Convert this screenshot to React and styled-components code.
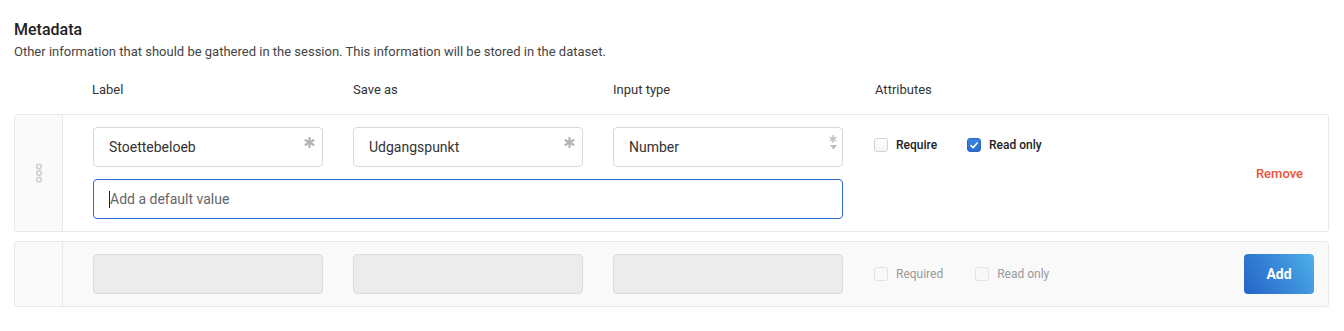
import React from "react";
import styled, { createGlobalStyle } from "styled-components";

const Global = createGlobalStyle`
  html, body { margin: 0; padding: 0; background: #fff; }
  body { font-family: Roboto, "Noto Sans", "Liberation Sans", sans-serif; color: #333; }
  * { box-sizing: border-box; }
`;

const Page = styled.div`
  padding: 20px 15px 0 14px;
  width: 1344px;
`;

const Title = styled.h2`
  margin: 0;
  font-size: 16px;
  font-weight: 500;
  color: #222;
  line-height: 20px;
`;

const Subtitle = styled.p`
  margin: 4px 0 0;
  font-size: 13px;
  color: #444;
  line-height: 16px;
`;

const HeaderRow = styled.div`
  display: grid;
  grid-template-columns: 261px 260px 262px 1fr;
  padding-left: 78px;
  margin: 18px 0 14px;
  height: 22px;
  align-items: center;
`;

const HeaderCell = styled.div`
  font-size: 13px;
  color: #333;
`;

const Card = styled.div`
  display: flex;
  margin-top: ${(p) => p.$mt}px;
  border: 1px solid #e6e8ef;
  border-radius: 3px;
  background: ${(p) => (p.$muted ? "#f9f9fa" : "#fff")};
  overflow: hidden;
`;

const Handle = styled.div`
  width: 48px;
  flex: none;
  background: #fafafa;
  border-right: 1px solid #e6e8ef;
  display: flex;
  align-items: center;
  justify-content: center;
`;

const Body = styled.div`
  flex: 1;
  display: flex;
  align-items: center;
  padding: 12px 14px 12px 30px;
`;

const Fields = styled.div`
  display: grid;
  grid-template-columns: 230px 230px 230px;
  column-gap: 30px;
  row-gap: 12px;
`;

const FieldBox = styled.div`
  position: relative;
  height: 40px;
  grid-column: ${(p) => (p.$wide ? "1 / span 3" : "auto")};
  border: 1px solid ${(p) => (p.$focus ? "#2c6bcf" : p.$disabled ? "#dcdcdc" : "#d9d9d9")};
  border-radius: 4px;
  background: ${(p) => (p.$disabled ? "#ececec" : "#fff")};
  display: flex;
  align-items: center;
  padding: 0 15px;
  font-size: 14px;
  color: #333;
`;

const Placeholder = styled.span`
  color: #666;
`;

const Caret = styled.span`
  display: inline-block;
  width: 1px;
  height: 17px;
  background: #222;
`;

const Marker = styled.span`
  position: absolute;
  top: ${(p) => p.$top}px;
  right: ${(p) => p.$right}px;
  display: flex;
  flex-direction: column;
  align-items: center;
  line-height: 0;
`;

const Attributes = styled.div`
  display: flex;
  align-items: center;
  gap: ${(p) => p.$gap}px;
  margin-left: 31px;
  align-self: ${(p) => (p.$top ? "flex-start" : "center")};
  margin-top: ${(p) => (p.$top ? 11 : 0)}px;
`;

const Check = styled.label`
  display: flex;
  align-items: center;
  gap: 8px;
  font-size: 12px;
  color: ${(p) => (p.$disabled ? "#999" : "#222")};
  font-weight: ${(p) => (p.$disabled ? 400 : 500)};
`;

const Box = styled.span`
  width: 14px;
  height: 14px;
  border-radius: 3px;
  border: 1px solid ${(p) => (p.$checked ? "#2a66c4" : p.$disabled ? "#e2e2e6" : "#cfd2da")};
  background: ${(p) =>
    p.$checked ? "linear-gradient(#3d86e0, #2a6bcc)" : p.$disabled ? "#f9f9fa" : "linear-gradient(#fff, #f3f4f7)"};
  display: flex;
  align-items: center;
  justify-content: center;
`;

const Spacer = styled.div`
  flex: 1;
`;

const RemoveLink = styled.button`
  border: 0;
  background: none;
  padding: 0;
  margin-right: 11px;
  font-family: inherit;
  font-size: 13px;
  font-weight: 500;
  color: #e9533b;
  cursor: pointer;
`;

const AddButton = styled.button`
  width: 70px;
  height: 40px;
  border: 0;
  border-radius: 4px;
  background: linear-gradient(60deg, #2565c7 0%, #3a8ad9 55%, #4cb1e7 100%);
  color: #fff;
  font-family: inherit;
  font-size: 14px;
  font-weight: 700;
  cursor: pointer;
`;

const Asterisk = ({ size = 11, color = "#b3b3b3" }) => (
  <svg width={size} height={size} viewBox="0 0 12 12">
    <g stroke={color} strokeWidth="2.4" strokeLinecap="round">
      <line x1="6" y1="1" x2="6" y2="11" />
      <line x1="1.7" y1="3.5" x2="10.3" y2="8.5" />
      <line x1="1.7" y1="8.5" x2="10.3" y2="3.5" />
    </g>
  </svg>
);

const DownArrow = () => (
  <svg width="7" height="5" viewBox="0 0 7 5">
    <path d="M0 0 L7 0 L3.5 4.5 Z" fill="#bdbdbd" />
  </svg>
);

const Dots = () => (
  <svg width="8" height="20" viewBox="0 0 8 20">
    {[3.5, 10, 16.5].map((cy) => (
      <circle key={cy} cx="4" cy={cy} r="2.3" fill="none" stroke="#cfcfcf" strokeWidth="1.6" />
    ))}
  </svg>
);

const Tick = () => (
  <svg width="8" height="7" viewBox="0 0 8 7">
    <path d="M1 3.6 L3.1 5.6 L7 1.2" fill="none" stroke="#fff" strokeWidth="1.6" strokeLinecap="round" strokeLinejoin="round" />
  </svg>
);

const Checkbox = ({ label, checked, disabled }) => (
  <Check $disabled={disabled}>
    <Box $checked={checked} $disabled={disabled}>{checked && <Tick />}</Box>
    {label}
  </Check>
);

export default function App() {
  return (
    <>
      <Global />
      <Page>
        <Title>Metadata</Title>
        <Subtitle>
          Other information that should be gathered in the session. This information will be stored in the dataset.
        </Subtitle>
        <HeaderRow>
          <HeaderCell>Label</HeaderCell>
          <HeaderCell>Save as</HeaderCell>
          <HeaderCell>Input type</HeaderCell>
          <HeaderCell>Attributes</HeaderCell>
        </HeaderRow>

        <Card $mt={0}>
          <Handle>
            <Dots />
          </Handle>
          <Body>
            <Fields>
              <FieldBox>
                Stoettebeloeb
                <Marker $top={9} $right={7}>
                  <Asterisk />
                </Marker>
              </FieldBox>
              <FieldBox>
                Udgangspunkt
                <Marker $top={9} $right={7}>
                  <Asterisk />
                </Marker>
              </FieldBox>
              <FieldBox>
                Number
                <Marker $top={7} $right={5}>
                  <Asterisk size={8} color="#c2c2c2" />
                  <span style={{ height: 2 }} />
                  <DownArrow />
                </Marker>
              </FieldBox>
              <FieldBox $wide $focus>
                <Caret />
                <Placeholder>Add a default value</Placeholder>
              </FieldBox>
            </Fields>
            <Attributes $top $gap={30}>
              <Checkbox label="Require" />
              <Checkbox label="Read only" checked />
            </Attributes>
            <Spacer />
            <RemoveLink>Remove</RemoveLink>
          </Body>
        </Card>

        <Card $mt={9} $muted>
          <Handle />
          <Body>
            <Fields>
              <FieldBox $disabled />
              <FieldBox $disabled />
              <FieldBox $disabled />
            </Fields>
            <Attributes $gap={32}>
              <Checkbox label="Required" disabled />
              <Checkbox label="Read only" disabled />
            </Attributes>
            <Spacer />
            <AddButton>Add</AddButton>
          </Body>
        </Card>
      </Page>
    </>
  );
}
